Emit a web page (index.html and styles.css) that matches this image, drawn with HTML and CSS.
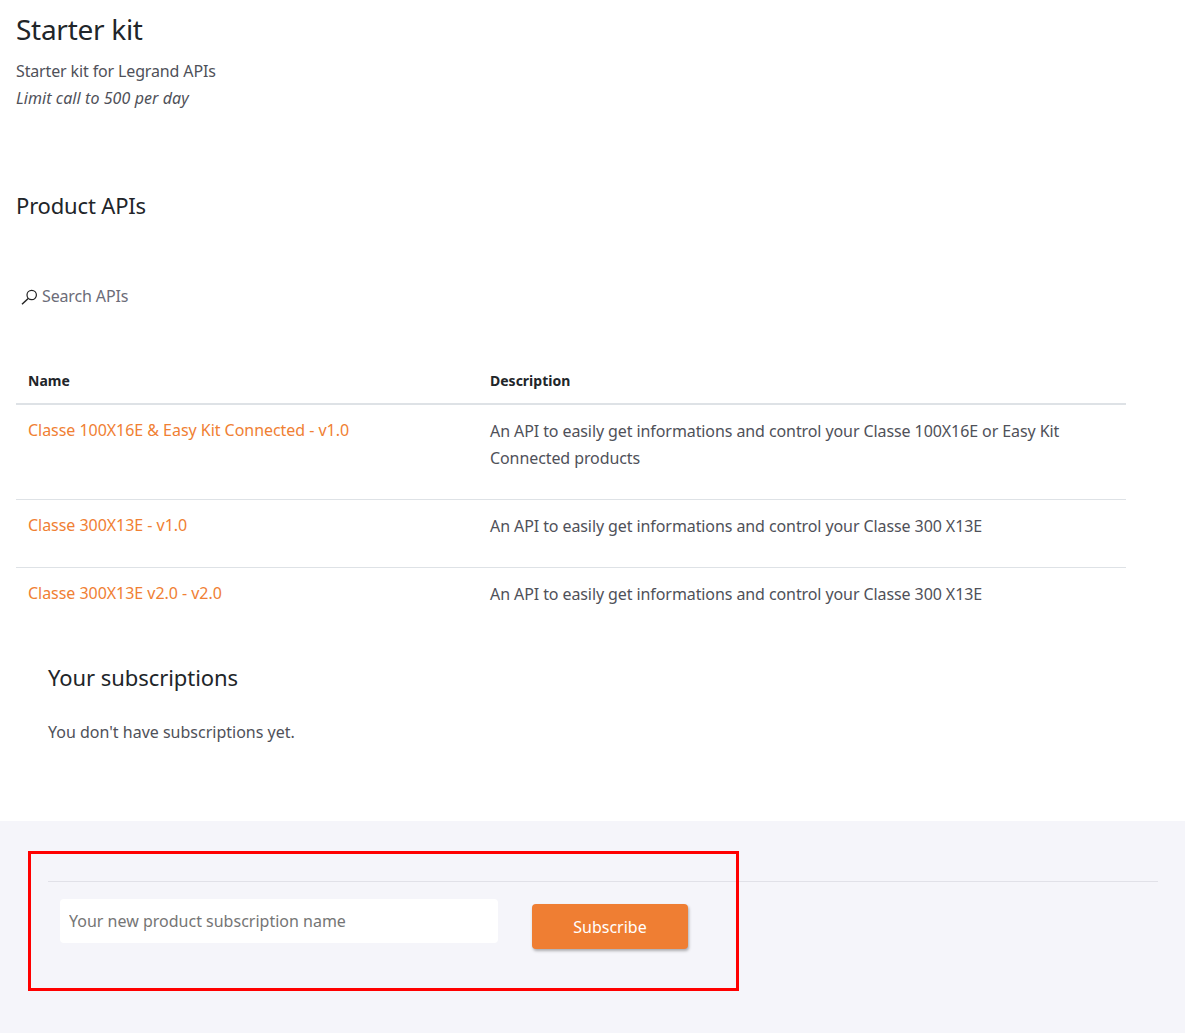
FILE: index.html
```html
<!DOCTYPE html>
<html lang="en">
<head>
<meta charset="utf-8">
<title>Starter kit</title>
<link rel="stylesheet" href="styles.css">
</head>
<body>
<main class="content">
  <h1 class="title">Starter kit</h1>
  <p class="intro">Starter kit for Legrand APIs</p>
  <p class="limit"><em>Limit call to 500 per day</em></p>
  <h2 class="section-title">Product APIs</h2>
  <div class="search">
    <svg class="search-icon" width="17" height="17" viewBox="0 0 17 17" fill="none" stroke="#222" stroke-width="1.2"><circle cx="10.7" cy="7" r="4.7"/><path d="M7.2 10.5 1 16.2" stroke-width="1.5"/></svg>
    <span>Search APIs</span>
  </div>
  <div class="table">
    <div class="row head"><div>Name</div><div>Description</div></div>
    <div class="row"><a class="api-link" href="#">Classe 100X16E &amp; Easy Kit Connected - v1.0</a><div class="desc">An API to easily get informations and control your Classe 100X16E or Easy Kit Connected products</div></div>
    <div class="row"><a class="api-link" href="#">Classe 300X13E - v1.0</a><div class="desc">An API to easily get informations and control your Classe 300 X13E</div></div>
    <div class="row"><a class="api-link" href="#">Classe 300X13E v2.0 - v2.0</a><div class="desc">An API to easily get informations and control your Classe 300 X13E</div></div>
  </div>
  <section class="subs">
    <h2 class="subs-title">Your subscriptions</h2>
    <p class="subs-empty">You don't have subscriptions yet.</p>
  </section>
</main>
<footer class="band">
  <div class="highlight">
    <div class="rule"></div>
    <form class="sub-form">
      <input class="name-input" type="text" placeholder="Your new product subscription name">
      <button class="btn" type="button">Subscribe</button>
    </form>
  </div>
</footer>
</body>
</html>
```
FILE: styles.css
```css
* { box-sizing: border-box; }
html, body { margin: 0; padding: 0; }
body { font-family: "Noto Sans", "Open Sans", sans-serif; color: #4f5159; background: #fff; height: 1033px; overflow: hidden; font-size: 16px; }
.content { padding: 11px 16px 0; height: 821px; }
.title { margin: 0; font-size: 28px; line-height: 36px; font-weight: 400; color: #212529; letter-spacing: -0.28px; }
.intro { margin: 11px 0 0; line-height: 27px; letter-spacing: -0.14px; }
.limit { margin: 0; line-height: 27px; letter-spacing: 0.08px; }
.section-title { margin: 78px 0 0; font-size: 22px; line-height: 30px; font-weight: 400; color: #212529; letter-spacing: -0.17px; }
.search { display: flex; align-items: center; gap: 4px; margin: 61px 0 0 5px; height: 30px; color: #6c6c78; letter-spacing: -0.14px; }
.table { width: 1110px; margin-top: 52px; }
.row { display: grid; grid-template-columns: 462px 1fr; padding: 13px 12px 27px; border-bottom: 1px solid #dee2e6; line-height: 27px; letter-spacing: -0.09px; }
.api-link { color: #f08033; text-decoration: none; margin-top: -1px; letter-spacing: -0.04px; }
.row.head { border-bottom: 2px solid #dee2e6; font-weight: 700; font-size: 14px; color: #212529; line-height: 22px; padding: 7px 12px 11px; letter-spacing: 0; }
.row:last-child { border-bottom: 0; }
.subs { padding-left: 32px; }
.subs-title { margin: 27px 0 0; font-size: 22px; line-height: 30px; font-weight: 400; color: #212529; letter-spacing: -0.06px; }
.subs-empty { margin: 27px 0 0; line-height: 27px; }
.band { background: #f5f5fa; height: 212px; padding: 30px 28px 0; isolation: isolate; }
.highlight { width: 711px; height: 140px; border: 3px solid #f00; position: relative; }
.rule { position: absolute; z-index: -1; left: 17px; top: 27px; width: 1110px; border-top: 1px solid #e1e1e8; }
.sub-form { display: flex; align-items: flex-start; padding: 45px 0 0 29px; gap: 34px; }
.name-input { width: 438px; height: 44px; border: 0; border-radius: 4px; background: #fff; padding: 0 9px; font: 16px "Noto Sans", sans-serif; }
.btn { width: 156px; height: 45px; margin-top: 5px; background: #ef7e33; color: #fff; border: 0; border-radius: 4px; font: 16px "Noto Sans", sans-serif; box-shadow: 1px 2px 3px rgba(0,0,0,.3); }
```
